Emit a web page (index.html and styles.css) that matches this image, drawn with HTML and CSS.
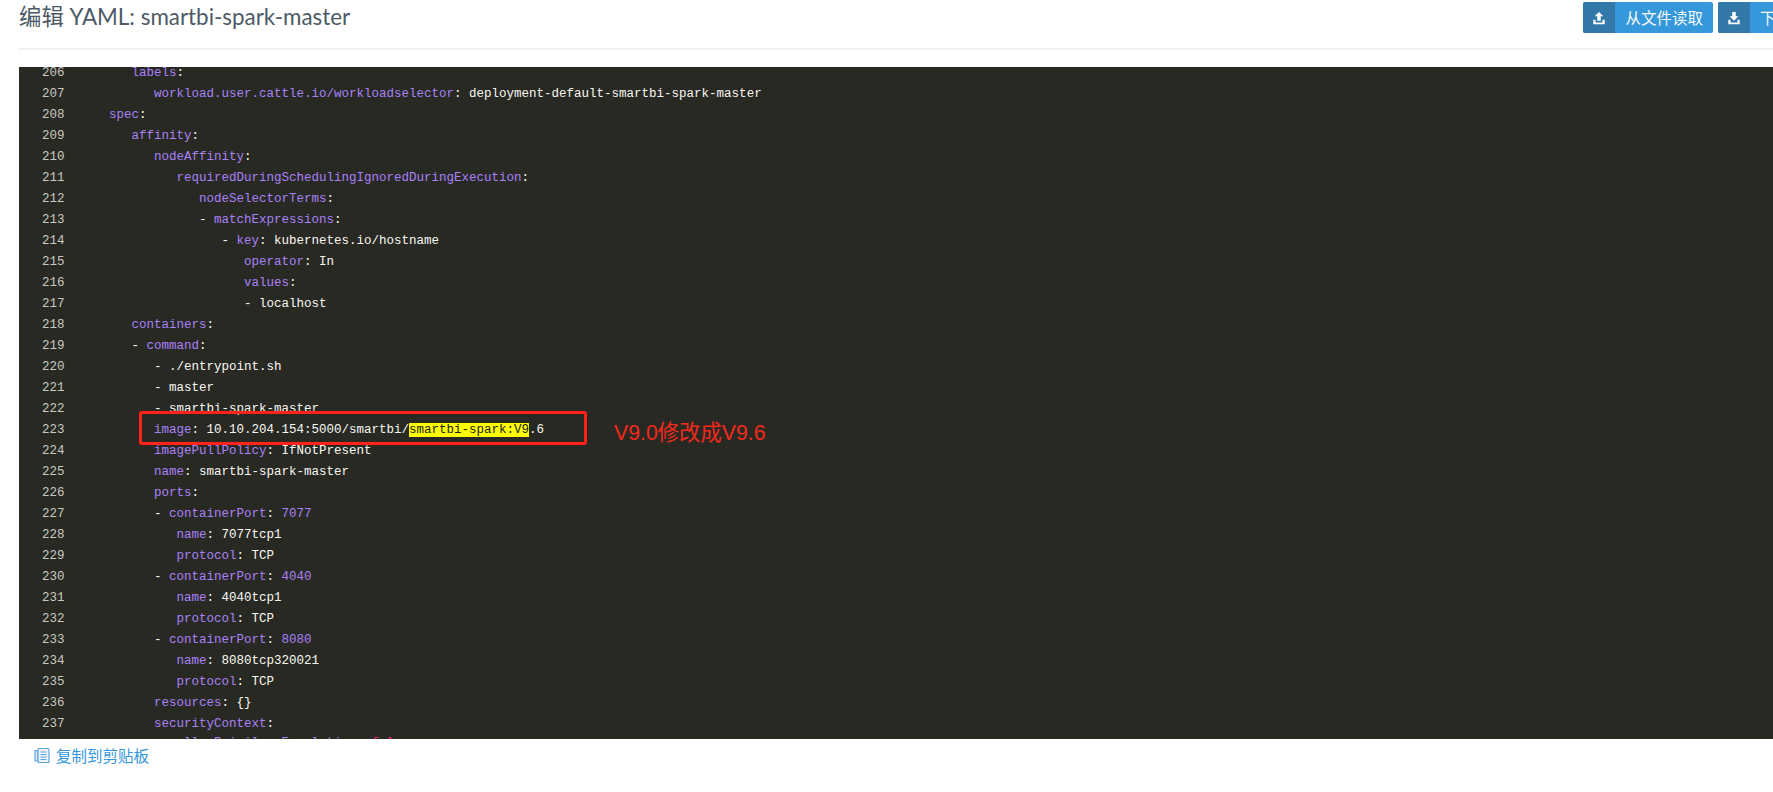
FILE: index.html
```html
<!DOCTYPE html>
<html lang="zh">
<head>
<meta charset="utf-8">
<title>编辑 YAML: smartbi-spark-master</title>
<link rel="stylesheet" href="styles.css">
</head>
<body>
<div class="page">
  <header class="head">
    <h1 class="title">编辑 YAML: smartbi-spark-master</h1>
    <div class="actions">
      <button class="btn"><span class="btn-icon"><svg viewBox="0 0 16 16" class="ico"><path d="M8 1 L13 6 H10 V11 H6 V6 H3 Z M1.500 10 H4 V13 H12 V10 H14.500 V15 H1.500 Z"/></svg></span><span class="btn-text">从文件读取</span></button>
      <button class="btn"><span class="btn-icon"><svg viewBox="0 0 16 16" class="ico"><path d="M6 1 H10 V6 H13 L8 11 L3 6 H6 Z M1.500 10 H4 V13 H12 V10 H14.500 V15 H1.500 Z"/></svg></span><span class="btn-text">下载文件</span></button>
    </div>
  </header>
  <div class="rule"></div>
  <div class="editor-wrap">
    <div class="editor">
      <div class="lines">
<div class="row"><span class="num">206</span><span class="code">      <i>labels</i>:</span></div>
<div class="row"><span class="num">207</span><span class="code">         <i>workload.user.cattle.io/workloadselector</i>: deployment-default-smartbi-spark-master</span></div>
<div class="row"><span class="num">208</span><span class="code">   <i>spec</i>:</span></div>
<div class="row"><span class="num">209</span><span class="code">      <i>affinity</i>:</span></div>
<div class="row"><span class="num">210</span><span class="code">         <i>nodeAffinity</i>:</span></div>
<div class="row"><span class="num">211</span><span class="code">            <i>requiredDuringSchedulingIgnoredDuringExecution</i>:</span></div>
<div class="row"><span class="num">212</span><span class="code">               <i>nodeSelectorTerms</i>:</span></div>
<div class="row"><span class="num">213</span><span class="code">               - <i>matchExpressions</i>:</span></div>
<div class="row"><span class="num">214</span><span class="code">                  - <i>key</i>: kubernetes.io/hostname</span></div>
<div class="row"><span class="num">215</span><span class="code">                     <i>operator</i>: In</span></div>
<div class="row"><span class="num">216</span><span class="code">                     <i>values</i>:</span></div>
<div class="row"><span class="num">217</span><span class="code">                     - localhost</span></div>
<div class="row"><span class="num">218</span><span class="code">      <i>containers</i>:</span></div>
<div class="row"><span class="num">219</span><span class="code">      - <i>command</i>:</span></div>
<div class="row"><span class="num">220</span><span class="code">         - ./entrypoint.sh</span></div>
<div class="row"><span class="num">221</span><span class="code">         - master</span></div>
<div class="row"><span class="num">222</span><span class="code">         - smartbi-spark-master</span></div>
<div class="row"><span class="num">223</span><span class="code">         <i>image</i>: 10.10.204.154:5000/smartbi/<mark class="hit">smartbi-spark:V9</mark>.6</span></div>
<div class="row"><span class="num">224</span><span class="code">         <i>imagePullPolicy</i>: IfNotPresent</span></div>
<div class="row"><span class="num">225</span><span class="code">         <i>name</i>: smartbi-spark-master</span></div>
<div class="row"><span class="num">226</span><span class="code">         <i>ports</i>:</span></div>
<div class="row"><span class="num">227</span><span class="code">         - <i>containerPort</i>: <i>7077</i></span></div>
<div class="row"><span class="num">228</span><span class="code">            <i>name</i>: 7077tcp1</span></div>
<div class="row"><span class="num">229</span><span class="code">            <i>protocol</i>: TCP</span></div>
<div class="row"><span class="num">230</span><span class="code">         - <i>containerPort</i>: <i>4040</i></span></div>
<div class="row"><span class="num">231</span><span class="code">            <i>name</i>: 4040tcp1</span></div>
<div class="row"><span class="num">232</span><span class="code">            <i>protocol</i>: TCP</span></div>
<div class="row"><span class="num">233</span><span class="code">         - <i>containerPort</i>: <i>8080</i></span></div>
<div class="row"><span class="num">234</span><span class="code">            <i>name</i>: 8080tcp320021</span></div>
<div class="row"><span class="num">235</span><span class="code">            <i>protocol</i>: TCP</span></div>
<div class="row"><span class="num">236</span><span class="code">         <i>resources</i>: {}</span></div>
<div class="row"><span class="num">237</span><span class="code">         <i>securityContext</i>:</span></div>
<div class="row peek"><span class="num">238</span><span class="code">            <i>allowPrivilegeEscalation</i>: <b>false</b></span></div>
      </div>
    </div>
    <div class="redbox"></div>
    <div class="note">V9.0修改成V9.6</div>
  </div>
  <a class="copy"><svg viewBox="0 0 16 16" class="copy-ico"><path class="back" d="M1 3.500 H4 V14 H1 Z"/><rect x="4" y="1.500" width="11" height="14" rx="1" class="sheet"/><path d="M6.500 5 H12.500 M6.500 7.500 H12.500 M6.500 10 H12.500 M6.500 12.500 H12.500"/></svg><span>复制到剪贴板</span></a>
</div>
</body>
</html>
```
FILE: styles.css
```css
html, body {
  margin: 0;
  padding: 0;
  height: 100%;
  overflow: hidden;
  background: #fff;
}
.page {
  width: 1813px;
  padding: 2px 0 0 19px;
  font-family: "Lato", "Noto Sans CJK SC", sans-serif;
}
.head {
  display: flex;
  justify-content: space-between;
  align-items: flex-start;
  height: 46px;
}
.title {
  margin: 0;
  font-size: 22.400px;
  font-weight: 400;
  line-height: 29px;
  color: #4d5a66;
}
.actions {
  display: flex;
  gap: 5px;
}
.btn {
  display: flex;
  align-items: stretch;
  height: 31px;
  padding: 0;
  border: 0;
  border-radius: 2px;
  overflow: hidden;
  background: #3498db;
  color: #f4f9fd;
  font: 15.500px/31px "Noto Sans CJK SC", sans-serif;
}
.btn-icon {
  flex: 0 0 32px;
  display: flex;
  align-items: center;
  justify-content: center;
  background: #3278a9;
}
.ico {
  width: 14px;
  height: 14px;
  fill: #fff;
}
.btn-text {
  padding: 0 10px;
  white-space: nowrap;
}
.rule {
  height: 2px;
  background: #ecf0f1;
  margin-bottom: 17px;
}
.editor-wrap {
  position: relative;
  height: 672px;
}
.editor {
  height: 100%;
  overflow: hidden;
  background: #292923;
}
.lines {
  padding-top: 0;
  margin-top: -4.500px;
  font: 12.500px/21px "Liberation Mono", monospace;
  color: #f8f8f2;
}
.row {
  display: flex;
  height: 21px;
  white-space: pre;
}
.peek .code {
  margin-top: -2px;
}
.num {
  flex: 0 0 67.500px;
  box-sizing: border-box;
  padding-left: 23px;
  color: #c8c8c2;
}
.code i {
  font-style: normal;
  color: #a881f8;
}
.code b {
  font-weight: 400;
  color: #f92672;
}
.hit {
  background: #ffff00;
  color: #222;
}
.redbox {
  position: absolute;
  left: 120px;
  top: 344px;
  width: 442px;
  height: 28px;
  border: 3px solid #ff2417;
  border-radius: 3px;
}
.note {
  position: absolute;
  left: 595px;
  top: 351px;
  font: 21.300px/30px "Liberation Sans", "Noto Sans CJK SC", sans-serif;
  color: #f5281c;
}
.copy {
  display: flex;
  align-items: center;
  gap: 6px;
  height: 32px;
  padding-left: 15px;
  color: #3498db;
  font: 15.500px/32px "Noto Sans CJK SC", sans-serif;
}
.copy-ico {
  width: 16px;
  height: 16px;
  fill: #fff;
  stroke: #5ba6dd;
  stroke-width: 1.200;
}
.copy-ico .sheet {
  fill: #eef4fb;
}
.copy-ico .back {
  fill: #dfe9f6;
}
```
